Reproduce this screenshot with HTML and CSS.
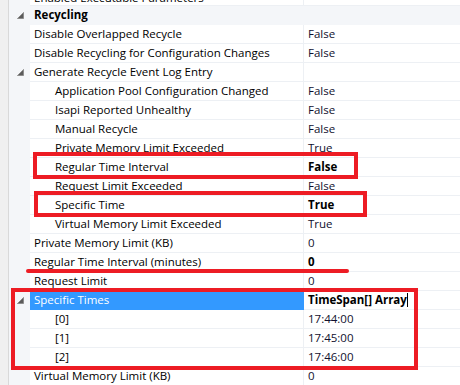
FILE: index.html
```html
<!DOCTYPE html>
<html>
	<head>
		<title>Recycling Eigenschaften</title>
		<link rel="stylesheet" href="styles.css">
	</head>
	<body>
	<div class="page">
		<div class="grid">
			<div class="row first"><div class="gut"></div><div class="name">Enabled Executable Parameters</div><div class="val"></div></div>
			<div class="row cat"><div class="gut"><svg class="tri" width="7" height="7" viewBox="0 0 7 7"><polygon points="6.5,0.5 6.5,6.5 0.5,6.5"/></svg></div><div class="name">Recycling</div><div class="val"></div></div>
			<div class="row"><div class="gut"></div><div class="name">Disable Overlapped Recycle</div><div class="val">False</div></div>
			<div class="row"><div class="gut"></div><div class="name">Disable Recycling for Configuration Changes</div><div class="val">False</div></div>
			<div class="row"><div class="gut"><svg class="tri" width="7" height="7" viewBox="0 0 7 7"><polygon points="6.5,0.5 6.5,6.5 0.5,6.5"/></svg></div><div class="name">Generate Recycle Event Log Entry</div><div class="val"></div></div>
			<div class="row"><div class="gut"></div><div class="name sub">Application Pool Configuration Changed</div><div class="val">False</div></div>
			<div class="row"><div class="gut"></div><div class="name sub">Isapi Reported Unhealthy</div><div class="val">False</div></div>
			<div class="row"><div class="gut"></div><div class="name sub">Manual Recycle</div><div class="val">False</div></div>
			<div class="row"><div class="gut"></div><div class="name sub">Private Memory Limit Exceeded</div><div class="val">True</div></div>
			<div class="row"><div class="gut"></div><div class="name sub">Regular Time Interval</div><div class="val bold">False</div></div>
			<div class="row"><div class="gut"></div><div class="name sub">Request Limit Exceeded</div><div class="val">False</div></div>
			<div class="row"><div class="gut"></div><div class="name sub">Specific Time</div><div class="val bold">True</div></div>
			<div class="row"><div class="gut"></div><div class="name sub">Virtual Memory Limit Exceeded</div><div class="val">True</div></div>
			<div class="row"><div class="gut"></div><div class="name">Private Memory Limit (KB)</div><div class="val">0</div></div>
			<div class="row"><div class="gut"></div><div class="name">Regular Time Interval (minutes)</div><div class="val bold">0</div></div>
			<div class="row"><div class="gut"></div><div class="name">Request Limit</div><div class="val">0</div></div>
			<div class="row sel"><div class="gut"><svg class="tri" width="7" height="7" viewBox="0 0 7 7"><polygon points="6.5,0.5 6.5,6.5 0.5,6.5"/></svg></div><div class="name">Specific Times</div><div class="val bold">TimeSpan[] Array<span class="caret"></span></div></div>
			<div class="row"><div class="gut"></div><div class="name sub">[0]</div><div class="val">17:44:00</div></div>
			<div class="row"><div class="gut"></div><div class="name sub">[1]</div><div class="val">17:45:00</div></div>
			<div class="row"><div class="gut"></div><div class="name sub">[2]</div><div class="val">17:46:00</div></div>
			<div class="row"><div class="gut"></div><div class="name">Virtual Memory Limit (KB)</div><div class="val">0</div></div>
		</div>
		<!-- rote Markierungen -->
		<div class="mark box1"></div>
		<div class="mark box2"></div>
		<div class="mark line1"></div>
		<div class="mark box3"></div>
	</div>
	</body>
</html>
```

FILE: styles.css
```css
html, body {
	margin:0;
	padding:0;
	background:#f0f0f0;
	overflow:hidden;
}
.page {
	position:relative;
	width:460px;
	height:385px;
	overflow:hidden;
	font-family:"Open Sans", "Noto Sans", sans-serif;
	font-size:11.5px;
	color:#000;
}
.grid {
	margin-left:8px;
	margin-top:-13px;
	width:451px;
	border-left:1px solid #d9d9d9;
	background:#fff;
}
.row {
	display:flex;
	height:19px;
}
.gut {
	width:21px;
	flex:none;
	background:#f4f6f9;
	position:relative;
}
.tri {
	position:absolute;
	left:8px;
	top:6px;
	fill:#5b5b5b;
	stroke:#8c8c8c;
	stroke-width:1;
}
.name {
	width:269px;
	flex:none;
	padding-left:4px;
	border-right:1px solid #edf0f4;
	border-bottom:1px solid #edf0f4;
	line-height:18px;
	white-space:nowrap;
	overflow:hidden;
}
.first .name {
	line-height:22px;
}
.name.sub {
	padding-left:25px;
	width:248px;
}
.val {
	flex:1;
	padding-left:4px;
	border-bottom:1px solid #edf0f4;
	line-height:18px;
	white-space:nowrap;
	overflow:hidden;
	color:#10102e;
}
.bold {
	font-weight:bold;
	color:#000;
}
.cat .name, .cat .val {
	background:#f4f6f9;
	font-weight:bold;
	border-right:none;
	border-bottom-color:#f4f6f9;
}
.sel .name {
	background:#3399ff;
	color:#fff;
	border-right-color:#3399ff;
	border-bottom-color:#3399ff;
}
.caret {
	display:inline-block;
	width:1px;
	height:14px;
	background:#000;
	vertical-align:-3px;
}
.mark {
	position:absolute;
	box-sizing:border-box;
	border:4px solid #ed1c24;
}
.box1 {
	left:33px;
	top:152px;
	width:325px;
	height:27px;
}
.box2 {
	left:34px;
	top:191px;
	width:333px;
	height:26px;
}
.box3 {
	left:11px;
	top:288px;
	width:407px;
	height:82px;
}
.line1 {
	left:26px;
	top:269px;
	width:323px;
	height:4px;
	border:none;
	background:#ed1c24;
	border-radius:2px;
}
```
